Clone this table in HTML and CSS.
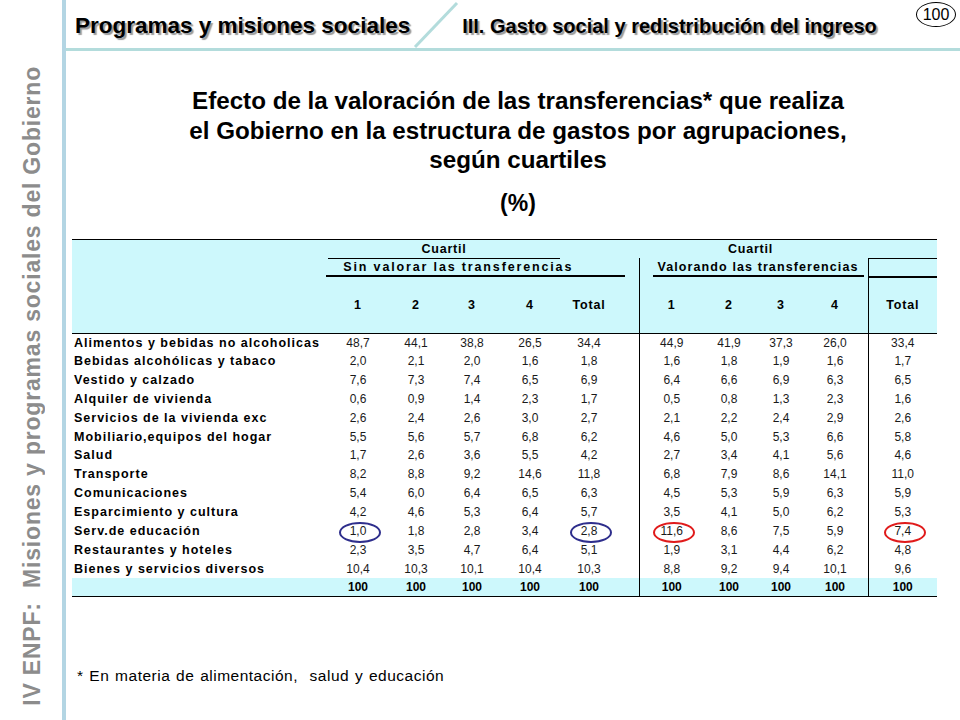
FILE: index.html
```html
<!DOCTYPE html>
<html lang="es">
<head>
<meta charset="utf-8">
<title>Programas y misiones sociales</title>
<link rel="stylesheet" href="styles.css">
</head>
<body>
<div class="page">
  <aside class="sidebar">
    <div class="side-text">IV ENPF:&nbsp; Misiones y programas sociales del Gobierno</div>
  </aside>
  <main class="main">
    <header class="topbar">
      <div class="section">Programas y misiones sociales</div>
      <svg class="slash" width="46" height="48" viewBox="0 0 46 48"><line x1="2" y1="47" x2="44" y2="3" stroke="#b3dcdc" stroke-width="3"/></svg>
      <div class="chapter">III. Gasto social y redistribución del ingreso</div>
      <div class="pagenum">100</div>
    </header>
    <section class="content">
      <h1 class="title">Efecto de la valoración de las transferencias* que realiza<br>el Gobierno en la estructura de gastos por agrupaciones,<br>según cuartiles</h1>
      <div class="unit">(%)</div>
      <table class="data">
        <colgroup>
          <col class="w-label"><col class="w-c1"><col class="w-c2"><col class="w-c3"><col class="w-c4"><col class="w-t"><col class="w-sp">
          <col class="w-c1b"><col class="w-c2b"><col class="w-c3b"><col class="w-c4b"><col class="w-sp2"><col class="w-tb">
        </colgroup>
        <thead>
          <tr class="h1">
            <th></th>
            <th colspan="4" class="cuartil-a"><span class="cu">Cuartil</span></th>
            <th colspan="2"></th>
            <th colspan="4" class="cuartil-b">Cuartil</th>
            <th colspan="2"></th>
          </tr>
          <tr class="h2">
            <th></th>
            <th colspan="6" class="grp"><div class="ul ul-a">Sin valorar las transferencias</div></th>
            <th colspan="5" class="grp vl"><div class="ul ul-b">Valorando las transferencias</div></th>
            <th class="vl tb-top"></th>
          </tr>
          <tr class="h3">
            <th></th>
            <th>1</th><th>2</th><th>3</th><th>4</th><th>Total</th><th></th>
            <th class="vl">1</th><th>2</th><th>3</th><th>4</th><th></th>
            <th class="vl">Total</th>
          </tr>
        </thead>
        <tbody>
          <tr><td class="lbl">Alimentos y bebidas no alcoholicas</td><td>48,7</td><td>44,1</td><td>38,8</td><td>26,5</td><td>34,4</td><td></td><td class="vl">44,9</td><td>41,9</td><td>37,3</td><td>26,0</td><td></td><td class="vl">33,4</td></tr>
          <tr><td class="lbl">Bebidas alcohólicas y tabaco</td><td>2,0</td><td>2,1</td><td>2,0</td><td>1,6</td><td>1,8</td><td></td><td class="vl">1,6</td><td>1,8</td><td>1,9</td><td>1,6</td><td></td><td class="vl">1,7</td></tr>
          <tr><td class="lbl">Vestido y calzado</td><td>7,6</td><td>7,3</td><td>7,4</td><td>6,5</td><td>6,9</td><td></td><td class="vl">6,4</td><td>6,6</td><td>6,9</td><td>6,3</td><td></td><td class="vl">6,5</td></tr>
          <tr><td class="lbl">Alquiler de vivienda</td><td>0,6</td><td>0,9</td><td>1,4</td><td>2,3</td><td>1,7</td><td></td><td class="vl">0,5</td><td>0,8</td><td>1,3</td><td>2,3</td><td></td><td class="vl">1,6</td></tr>
          <tr><td class="lbl">Servicios de la vivienda exc</td><td>2,6</td><td>2,4</td><td>2,6</td><td>3,0</td><td>2,7</td><td></td><td class="vl">2,1</td><td>2,2</td><td>2,4</td><td>2,9</td><td></td><td class="vl">2,6</td></tr>
          <tr><td class="lbl">Mobiliario,equipos del hogar</td><td>5,5</td><td>5,6</td><td>5,7</td><td>6,8</td><td>6,2</td><td></td><td class="vl">4,6</td><td>5,0</td><td>5,3</td><td>6,6</td><td></td><td class="vl">5,8</td></tr>
          <tr><td class="lbl">Salud</td><td>1,7</td><td>2,6</td><td>3,6</td><td>5,5</td><td>4,2</td><td></td><td class="vl">2,7</td><td>3,4</td><td>4,1</td><td>5,6</td><td></td><td class="vl">4,6</td></tr>
          <tr><td class="lbl">Transporte</td><td>8,2</td><td>8,8</td><td>9,2</td><td>14,6</td><td>11,8</td><td></td><td class="vl">6,8</td><td>7,9</td><td>8,6</td><td>14,1</td><td></td><td class="vl">11,0</td></tr>
          <tr><td class="lbl">Comunicaciones</td><td>5,4</td><td>6,0</td><td>6,4</td><td>6,5</td><td>6,3</td><td></td><td class="vl">4,5</td><td>5,3</td><td>5,9</td><td>6,3</td><td></td><td class="vl">5,9</td></tr>
          <tr><td class="lbl">Esparcimiento y cultura</td><td>4,2</td><td>4,6</td><td>5,3</td><td>6,4</td><td>5,7</td><td></td><td class="vl">3,5</td><td>4,1</td><td>5,0</td><td>6,2</td><td></td><td class="vl">5,3</td></tr>
          <tr><td class="lbl">Serv.de educación</td><td><span class="ring blue">1,0</span></td><td>1,8</td><td>2,8</td><td>3,4</td><td><span class="ring blue">2,8</span></td><td></td><td class="vl"><span class="ring red">11,6</span></td><td>8,6</td><td>7,5</td><td>5,9</td><td></td><td class="vl"><span class="ring red">7,4</span></td></tr>
          <tr><td class="lbl">Restaurantes y hoteles</td><td>2,3</td><td>3,5</td><td>4,7</td><td>6,4</td><td>5,1</td><td></td><td class="vl">1,9</td><td>3,1</td><td>4,4</td><td>6,2</td><td></td><td class="vl">4,8</td></tr>
          <tr><td class="lbl">Bienes y servicios diversos</td><td>10,4</td><td>10,3</td><td>10,1</td><td>10,4</td><td>10,3</td><td></td><td class="vl">8,8</td><td>9,2</td><td>9,4</td><td>10,1</td><td></td><td class="vl">9,6</td></tr>
        </tbody>
        <tfoot>
          <tr><td></td><td>100</td><td>100</td><td>100</td><td>100</td><td>100</td><td></td><td class="vl">100</td><td>100</td><td>100</td><td>100</td><td></td><td class="vl">100</td></tr>
        </tfoot>
      </table>
      <p class="note">* En materia de alimentación,&nbsp; salud y educación</p>
    </section>
  </main>
</div>
</body>
</html>
```

FILE: styles.css
```css
* { box-sizing: border-box; }
html, body { margin: 0; padding: 0; background: #fff; }
body { font-family: "Liberation Sans", Arial, sans-serif; color: #000; }

.page {
  display: flex;
  width: 960px;
  height: 720px;
  overflow: hidden;
}

.sidebar {
  width: 66px;
  flex: 0 0 66px;
  border-right: 4px solid #b3d5e3;
  display: flex;
  align-items: flex-end;
  justify-content: center;
  padding-bottom: 14px;
}
.side-text {
  writing-mode: vertical-rl;
  transform: rotate(180deg);
  font-size: 23px;
  font-weight: bold;
  letter-spacing: 0.8px;
  color: #8c8c8c;
  white-space: nowrap;
  margin-left: 2px;
}

.main { flex: 1; display: flex; flex-direction: column; }

.topbar {
  height: 51px;
  border-bottom: 3px solid #b3dcdc;
  display: flex;
  align-items: flex-end;
  padding-left: 9px;
  position: relative;
}
.section {
  font-size: 22.5px;
  font-weight: bold;
  line-height: 26px;
  margin-bottom: 9px;
  text-shadow: 2px 2px 1px #9a9a9a;
}
.slash { display: block; margin-left: 3px; }
.chapter {
  font-size: 20px;
  font-weight: bold;
  line-height: 22px;
  margin-left: 3px;
  margin-bottom: 11px;
  text-shadow: 2px 2px 1px #9a9a9a;
}
.pagenum {
  position: absolute;
  right: 4px;
  top: 2px;
  width: 40px;
  height: 25px;
  border: 1px solid #000;
  border-radius: 50%;
  font-size: 16px;
  line-height: 23px;
  text-align: center;
}

.content { padding-left: 6px; }

.title {
  margin: 35px 0 0 4px;
  font-size: 24.2px;
  line-height: 29.5px;
  font-weight: bold;
  text-align: center;
}
.unit {
  margin: 13px 0 0 4px;
  font-size: 23px;
  line-height: 30px;
  font-weight: bold;
  text-align: center;
}

.data {
  margin-top: 21px;
  border-collapse: collapse;
  table-layout: fixed;
  width: 865px;
  font-size: 12px;
  border-top: 1px solid #000;
  border-bottom: 1px solid #000;
}
.w-label { width: 256px; }
.w-c1 { width: 60px; }
.w-c2 { width: 56px; }
.w-c3 { width: 56px; }
.w-c4 { width: 60px; }
.w-t { width: 58px; }
.w-sp { width: 21px; }
.w-c1b { width: 65px; }
.w-c2b { width: 50px; }
.w-c3b { width: 54px; }
.w-c4b { width: 54px; }
.w-sp2 { width: 6px; }
.w-tb { width: 69px; }

.data thead { background: #cdf8fc; }
.data th {
  padding: 0;
  font-weight: bold;
  font-size: 12.5px;
  letter-spacing: 0.8px;
  text-align: center;
}
.h1 { height: 19px; }
.h2 { height: 19px; }
.h3 { height: 56px; border-bottom: 1px solid #000; }
.h1 th { vertical-align: middle; }
.cuartil-a { border-bottom: 1px solid #000; }
.cuartil-b { text-align: center; }
.grp { vertical-align: bottom; }
.ul {
  border-bottom: 2px solid #000;
  line-height: 16px;
  text-align: center;
}
.ul-a { margin: 0 14px 0 -2px; padding-right: 34px; letter-spacing: 1.85px; }
.ul-b { margin: 0 4px 0 13px; letter-spacing: 1.1px; }
.tb-top { border-top: 1px solid #000; border-bottom: 2px solid #000; }
.vl { border-left: 1px solid #000; }

.data tbody tr { height: 18.85px; }
.data td {
  padding: 0;
  text-align: center;
  line-height: 14px;
  white-space: nowrap;
  color: #1a1a1a;
}
.data td.lbl {
  text-align: left;
  font-weight: bold;
  font-size: 12.5px;
  letter-spacing: 1px;
  padding-left: 2px;
  color: #000;
}
.data tfoot tr { height: 19px; background: #cdf8fc; }
.data tfoot td { font-weight: bold; color: #000; }

.ring { position: relative; display: inline-block; }
.ring::after {
  content: "";
  position: absolute;
  left: 50%;
  top: 50%;
  width: 38px;
  height: 17px;
  margin: -9px 0 0 -19px;
  border: 2px solid;
  border-radius: 50%;
}
.ring.blue::after { border-color: #2e2e8c; }
.ring.red::after { border-color: #e01b1b; }

.note {
  margin: 70px 0 0 5px;
  font-size: 15.5px;
  letter-spacing: 0.5px;
  word-spacing: 1px;
  line-height: 18px;
}
```
